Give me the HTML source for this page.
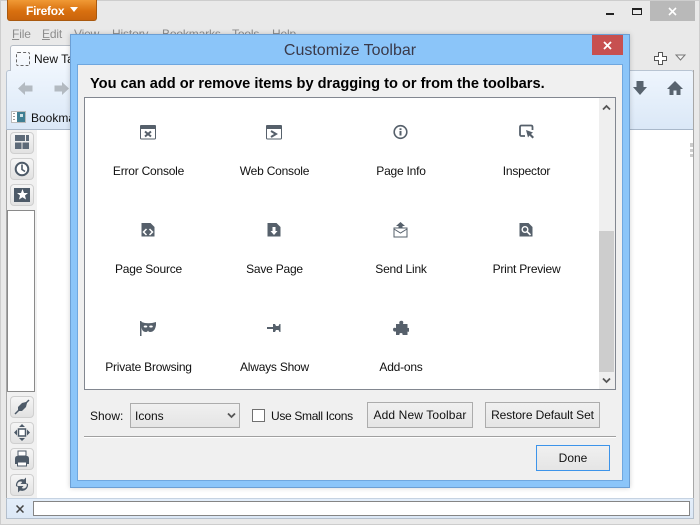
<!DOCTYPE html>
<html><head><meta charset="utf-8"><style>
html,body{margin:0;padding:0}
body{width:700px;height:525px;position:relative;overflow:hidden;background:#e9e9e9;font-family:"Liberation Sans",sans-serif;font-size:12px;color:#111}
.a{position:absolute;box-sizing:border-box}
.t{position:absolute;white-space:nowrap;line-height:14px}
.m{color:#8d8d8d;top:27px;letter-spacing:-.15px}
.lbl{position:absolute;width:126px;text-align:center;white-space:nowrap;line-height:14px;font-size:12px;letter-spacing:-.22px;color:#111}
.ic{position:absolute;width:16px;height:16px}
.sb{position:absolute;left:10px;width:24px;height:22px;border-radius:4px;background:linear-gradient(#f6f6f6,#e2e2e2);border:1px solid #cfcfcf;box-sizing:border-box}
.btn{position:absolute;box-sizing:border-box;background:linear-gradient(#f0f0f0,#e5e5e5);border:1px solid #acacac;text-align:center;font-size:12px;color:#111}
</style></head><body>
<div class="a" style="left:0;top:0;width:700px;height:525px;border:1px solid #cdcdcd"></div>
<div class="a" style="left:7px;top:0;width:90px;height:21px;background:linear-gradient(#f09a35,#d9700f 55%,#c9640c);border:1px solid #a9590f;border-top:0;border-radius:0 0 3px 3px"></div>
<div class="t" style="left:26px;top:4px;color:#fff;font-weight:bold;font-size:12px;letter-spacing:-.25px">Firefox</div>
<svg class="a" style="left:70px;top:7px" width="8" height="6"><path d="M0 0H8L4 5Z" fill="#fff"/></svg>
<div class="a" style="left:606px;top:13px;width:8px;height:2px;background:#222"></div>
<div class="a" style="left:632px;top:8px;width:10px;height:7px;border:1px solid #222;border-top-width:2px"></div>
<div class="a" style="left:650px;top:1px;width:45px;height:20px;background:#b9b9b9"></div>
<svg class="a" style="left:668px;top:7px" width="9" height="9"><path d="M1 1L8 8M8 1L1 8" stroke="#fff" stroke-width="1.6"/></svg>
<div class="t m" style="left:12px"><u>F</u>ile</div>
<div class="t m" style="left:42px"><u>E</u>dit</div>
<div class="t m" style="left:74px">View</div>
<div class="t m" style="left:112px">History</div>
<div class="t m" style="left:162px">Bookmarks</div>
<div class="t m" style="left:232px">Tools</div>
<div class="t m" style="left:272px">Help</div>
<div class="a" style="left:6px;top:70px;width:688px;height:60px;background:linear-gradient(#eef5fd,#dbe8f7);border:1px solid #b8c4d2;border-bottom:1px solid #a9b8ca;border-radius:3px 3px 0 0"></div>
<div class="a" style="left:10px;top:45px;width:80px;height:26px;background:linear-gradient(#fdfdfd,#eef5fd);border:1px solid #b5bcc5;border-bottom:0;border-radius:3px 3px 0 0"></div>
<div class="a" style="left:16px;top:52px;width:14px;height:14px;border:1px dashed #666;border-radius:2px"></div>
<div class="t" style="left:34px;top:52px">New Tab</div>
<svg class="a" style="left:18px;top:81px" width="15" height="15"><path d="M0 7.5L7 1V4.5H14.5V10.5H7V14Z" fill="#b3bac1"/></svg>
<svg class="a" style="left:54px;top:81px" width="15" height="15"><path d="M15 7.5L8 1V4.5H.5V10.5H8V14Z" fill="#b3bac1"/></svg>
<div class="a" style="left:11px;top:111px;width:15px;height:12px;background:#fff;border:1px solid #bbb"></div>
<div class="a" style="left:13px;top:113px;width:2px;height:8px;background:repeating-linear-gradient(#999 0 1px,#fff 1px 3px)"></div>
<div class="a" style="left:17px;top:112px;width:8px;height:10px;background:#3f7f93"></div>
<div class="a" style="left:20px;top:114px;width:3px;height:3px;background:#cfe3e8"></div>
<div class="t" style="left:31px;top:111px">Bookmarks</div>
<svg class="a" style="left:654px;top:52px" width="13" height="13"><path d="M4.5 .5H8.5V4.5H12.5V8.5H8.5V12.5H4.5V8.5H.5V4.5H4.5Z" fill="#fff" stroke="#555"/></svg>
<svg class="a" style="left:675px;top:54px" width="11" height="8"><path d="M1 1H10L5.5 6Z" fill="#f4f4f4" stroke="#777"/></svg>
<svg class="a" style="left:632px;top:80px" width="16" height="16"><path d="M4.5 1H11.5V7H15L8 15L1 7H4.5Z" fill="#58636e"/></svg>
<svg class="a" style="left:667px;top:80px" width="16" height="16"><path d="M8 1L16 9H13.5V15H9.5V10.5H6.5V15H2.5V9H0Z" fill="#58636e"/></svg>
<div class="a" style="left:37px;top:130px;width:656px;height:368px;background:#fff"></div>
<div class="a" style="left:690px;top:143px;width:4px;height:4px;background:#ccc"></div>
<div class="a" style="left:690px;top:149px;width:4px;height:3px;background:#ccc"></div>
<div class="a" style="left:690px;top:154px;width:4px;height:3px;background:#ccc"></div>
<div class="a" style="left:693px;top:70px;width:1px;height:449px;background:#a7a7a7"></div>
<div class="a" style="left:6px;top:130px;width:31px;height:368px;background:#f1f1f1"></div>
<div class="a" style="left:6px;top:130px;width:1px;height:389px;background:#a7a7a7"></div>
<div class="sb" style="top:132px"></div>
<svg class="a" style="left:15px;top:135px" width="15" height="15"><path d="M0 0H10V6H0ZM11 0H14V6H11ZM0 7.5H6.5V14H0ZM7.5 7.5H14V14H7.5Z" fill="#5d6a78"/></svg>
<div class="sb" style="top:158px"></div>
<svg class="a" style="left:14px;top:161px" width="16" height="16"><circle cx="8" cy="8" r="6.3" fill="#fff" stroke="#4d5a68" stroke-width="2"/><path d="M8 3.5V8.5L11 10.5" fill="none" stroke="#4d5a68" stroke-width="1.6"/></svg>
<div class="sb" style="top:184px"></div>
<div class="a" style="left:14px;top:188px;width:16px;height:14px;background:#4d5a68"></div>
<svg class="a" style="left:17px;top:189px" width="11" height="11"><path d="M5.5 0L7 4H11L8 6.5L9 10.5L5.5 8.2L2 10.500L3 6.5L0 4H4Z" fill="#fff"/></svg>
<div class="a" style="left:7px;top:210px;width:28px;height:182px;background:#fff;border:1px solid #8a8a8a"></div>
<div class="sb" style="top:396px"></div>
<svg class="a" style="left:14px;top:399px" width="16" height="16"><path d="M1 15L15 1" stroke="#4d5a68" stroke-width="1.5"/><path d="M4 8L8 4L12 3L13 4L12 8L8 12L4 12Z" fill="#4d5a68"/></svg>
<div class="sb" style="top:422px"></div>
<svg class="a" style="left:14px;top:424px" width="16" height="17"><path d="M8 0L11 3H5ZM8 17L5 14H11ZM0 8.5L3 5.5V11.5ZM16 8.5L13 11.5V5.5Z" fill="#4d5a68"/><rect x="4.5" y="5" width="7" height="7" fill="#fff" stroke="#4d5a68" stroke-width="1.5"/></svg>
<div class="sb" style="top:448px"></div>
<svg class="a" style="left:14px;top:450px" width="16" height="18"><path d="M4 1H12V6H4Z" fill="#fff" stroke="#4d5a68"/><path d="M1 9Q1 6 3 6H13Q15 6 15 9V14H1Z" fill="#4d5a68"/><rect x="3.5" y="12" width="9" height="4" fill="#fff" stroke="#4d5a68"/></svg>
<div class="sb" style="top:474px"></div>
<svg class="a" style="left:14px;top:477px" width="16" height="16"><path d="M2 9A6 6 0 0 1 10 2.5L12 .5V7H6.5L8.3 5A3.2 3.2 0 0 0 4.7 10.5ZM14 7A6 6 0 0 1 6 13.5L4 15.5V9H9.5L7.7 11A3.2 3.2 0 0 0 11.3 5.5Z" fill="#4d5a68"/></svg>
<div class="a" style="left:6px;top:498px;width:688px;height:21px;background:linear-gradient(#e4eefa,#dce8f6);border:1px solid #b4bfcc;border-top:1px solid #c6d3e2"></div>
<svg class="a" style="left:16px;top:505px" width="8" height="8"><path d="M.5 .5L7.5 7.5M7.5 .5L.5 7.5" stroke="#444" stroke-width="1.5"/></svg>
<div class="a" style="left:33px;top:501px;width:657px;height:15px;background:#fff;border:1px solid #858585"></div>

<!-- Dialog -->
<div class="a" style="left:70px;top:34px;width:560px;height:454px;background:#8bc5f9;border:1px solid #6c9fd4;box-shadow:0 0 5px rgba(0,0,0,.18)"></div>
<div class="t" style="left:70px;top:42px;width:560px;text-align:center;font-size:16px;line-height:18px;color:#3a3a4a">Customize Toolbar</div>
<div class="a" style="left:592px;top:35px;width:31px;height:20px;background:#c75050"></div>
<svg class="a" style="left:603px;top:41px" width="9" height="9"><path d="M1 1L8 8M8 1L1 8" stroke="#fff" stroke-width="1.8"/></svg>
<div class="a" style="left:77px;top:64px;width:546px;height:417px;background:#f0f0f0;border:1px solid #6fa7df"></div>
<div class="t" style="left:90px;top:76px;font-size:14.6px;line-height:16px;font-weight:bold;color:#000">You can add or remove items by dragging to or from the toolbars.</div>
<div class="a" style="left:84px;top:97px;width:532px;height:293px;background:#fff;border:1px solid #828790"></div>
<div class="a" style="left:599px;top:98px;width:16px;height:291px;background:#efefef"></div>
<div class="a" style="left:599px;top:231px;width:15px;height:141px;background:#cdcdcd"></div>
<svg class="a" style="left:602px;top:104px" width="9" height="7"><path d="M1 5.5L4.5 2L8 5.5" fill="none" stroke="#555" stroke-width="1.8"/></svg>
<svg class="a" style="left:602px;top:377px" width="9" height="7"><path d="M1 1.5L4.5 5L8 1.5" fill="none" stroke="#555" stroke-width="1.8"/></svg>

<!-- Row 1 icons -->
<svg class="ic" style="left:140px;top:125px"><rect x=".5" y="1" width="15" height="13" rx="1" fill="#fff" stroke="#56606b"/><rect x="0" y="0" width="16" height="4" rx="1" fill="#56606b"/><path d="M5 6.5L11 11.5M11 6.5L5 11.5" stroke="#56606b" stroke-width="2"/></svg>
<svg class="ic" style="left:266px;top:125px"><rect x=".5" y="1" width="15" height="13" rx="1" fill="#fff" stroke="#56606b"/><rect x="0" y="0" width="16" height="4" rx="1" fill="#56606b"/><path d="M5 6L10 9L5 12" fill="none" stroke="#56606b" stroke-width="2"/></svg>
<svg class="ic" style="left:393px;top:124px"><circle cx="7.5" cy="8" r="6.3" fill="#fff" stroke="#56606b" stroke-width="1.6"/><rect x="6.5" y="7" width="2" height="4.5" fill="#56606b"/><rect x="6.5" y="4.3" width="2" height="1.8" fill="#56606b"/></svg>
<svg class="ic" style="left:519px;top:124px"><path d="M6 12H2.5Q1 12 1 10.5V3Q1 1.5 2.5 1.5H12Q13.5 1.5 13.5 3V6" fill="none" stroke="#56606b" stroke-width="1.8"/><path d="M7 6L14 8.5L12 10L15 13L13.5 14.5L10.5 11.5L9 13.5Z" fill="#56606b"/></svg>
<div class="lbl" style="left:85.5px;top:164px">Error Console</div>
<div class="lbl" style="left:211.5px;top:164px">Web Console</div>
<div class="lbl" style="left:338px;top:164px">Page Info</div>
<div class="lbl" style="left:463.5px;top:164px">Inspector</div>
<!-- Row 2 icons -->
<svg class="ic" style="left:140px;top:222px"><path d="M1.5 1H10.5L14.5 5V14.5H1.5Z" fill="#56606b"/><path d="M6.5 7L3.5 10L6.5 13M9.5 7L12.5 10L9.5 13" fill="none" stroke="#fff" stroke-width="1.5"/></svg>
<svg class="ic" style="left:266px;top:222px"><path d="M1.5 1H10.5L14.5 5V14.5H1.5Z" fill="#56606b"/><path d="M6.5 5H9.5V9H11.5L8 13L4.5 9H6.5Z" fill="#fff"/></svg>
<svg class="ic" style="left:393px;top:222px"><path d="M7.5 0L12 4H9.5V7H5.5V4H3Z" fill="#56606b"/><path d="M1 6H14V15H1Z" fill="#fff" stroke="#56606b"/><path d="M1 7L7.5 11L14 7" fill="none" stroke="#56606b"/></svg>
<svg class="ic" style="left:518px;top:222px"><path d="M1.5 1H10.5L14.5 5V14.5H1.5Z" fill="#56606b"/><circle cx="7" cy="7.5" r="2.8" fill="none" stroke="#fff" stroke-width="1.4"/><path d="M9 9.5L12.5 13" stroke="#fff" stroke-width="1.6"/></svg>
<div class="lbl" style="left:85.5px;top:262px">Page Source</div>
<div class="lbl" style="left:211.5px;top:262px">Save Page</div>
<div class="lbl" style="left:338px;top:262px">Send Link</div>
<div class="lbl" style="left:463.5px;top:262px">Print Preview</div>
<!-- Row 3 icons -->
<svg class="ic" style="left:140px;top:320px"><path d="M0 1H1.5V16H0Z" fill="#56606b"/><path d="M1.5 2Q8 4.5 16 2V5Q15 12 10 12Q8.5 12 8 10.5Q7.5 12 6 12Q1.5 12 1.5 6Z" fill="#56606b"/><ellipse cx="5.5" cy="6.5" rx="1.8" ry="1" fill="#fff"/><ellipse cx="11" cy="6.5" rx="1.8" ry="1" fill="#fff"/></svg>
<svg class="ic" style="left:266px;top:320px"><path d="M1 7H8V9H1Z" fill="#56606b"/><path d="M7 4H9L10 6H12.5L13.5 4H14.5V12H13.5L12.5 10H10L9 12H7Z" fill="#56606b"/></svg>
<svg class="ic" style="left:393px;top:320px"><path d="M6.5 4Q5.5 1 8.5 .8Q11 1 10 4H14.5V8Q17 7.5 16.5 10.5Q15.5 12.5 14.5 11.5V15H9.5Q10 13 8 13Q6 13 6.5 15H3V11.5Q0 12 0 9.5Q0 7 3 8V4Z" fill="#56606b"/></svg>
<div class="lbl" style="left:85.5px;top:360px">Private Browsing</div>
<div class="lbl" style="left:211.5px;top:360px">Always Show</div>
<div class="lbl" style="left:338px;top:360px">Add-ons</div>

<div class="t" style="left:90px;top:409px">Show:</div>
<div class="a" style="left:130px;top:403px;width:110px;height:25px;background:linear-gradient(#f0f0f0,#e5e5e5);border:1px solid #acacac"></div>
<div class="t" style="left:135px;top:409px">Icons</div>
<svg class="a" style="left:227px;top:412px" width="9" height="7"><path d="M1 1.5L4.5 5L8 1.5" fill="none" stroke="#555" stroke-width="1.8"/></svg>
<div class="a" style="left:252px;top:409px;width:13px;height:13px;background:#fff;border:1px solid #707070"></div>
<div class="t" style="left:271px;top:409px;letter-spacing:-.33px">Use Small Icons</div>
<div class="btn" style="left:367px;top:402px;width:106px;height:26px;line-height:24px;letter-spacing:.12px">Add New Toolbar</div>
<div class="btn" style="left:485px;top:402px;width:115px;height:26px;line-height:24px;letter-spacing:-.1px">Restore Default Set</div>
<div class="a" style="left:84px;top:436px;width:532px;height:1px;background:#a0a0a0"></div>
<div class="a" style="left:84px;top:437px;width:532px;height:1px;background:#fff"></div>
<div class="btn" style="left:536px;top:445px;width:74px;height:26px;line-height:24px;border-color:#3d94ea">Done</div>
</body></html>
